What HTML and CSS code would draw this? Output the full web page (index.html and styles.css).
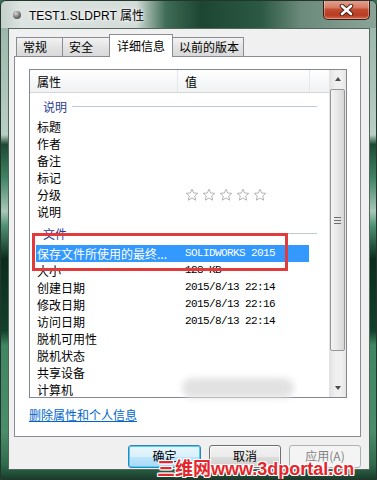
FILE: index.html
```html
<!DOCTYPE html>
<html lang="zh-CN">
<head>
  <meta charset="UTF-8" />
  <title>TEST1.SLDPRT 属性</title>
  <link rel="stylesheet" href="styles.css">
</head>
<body>

  <div class="window">
    <div class="titlebar">
      <span class="app-icon"></span>
      <span class="title">TEST1.SLDPRT 属性</span>
      <button class="close-btn" aria-label="关闭">
        <svg width="15" height="12" viewBox="0 0 15 12">
          <path d="M3 2 L12 10 M12 2 L3 10" stroke="#4a1a12" stroke-width="4.4" stroke-linecap="round"/>
          <path d="M3 2 L12 10 M12 2 L3 10" stroke="#ffffff" stroke-width="2.6" stroke-linecap="round"/>
        </svg>
      </button>
    </div>

    <div class="client">
      <div class="tabs">
        <div class="tab">常规</div>
        <div class="tab">安全</div>
        <div class="tab active">详细信息</div>
        <div class="tab">以前的版本</div>
      </div>

      <div class="panel">
        <div class="listview">
          <div class="list-body">
            <div class="list-header">
              <div class="hcell name">属性</div>
              <div class="hcell value">值</div>
              <div class="hcell filler"></div>
            </div>

            <div class="group"><span>说明</span><i></i></div>
            <div class="row"><span>标题</span><span></span></div>
            <div class="row"><span>作者</span><span></span></div>
            <div class="row"><span>备注</span><span></span></div>
            <div class="row"><span>标记</span><span></span></div>
            <div class="row">
              <span>分级</span>
              <span class="stars">
                <svg viewBox="0 0 14 14"><path d="M7 1.2 L8.7 5 L12.8 5.3 L9.7 8 L10.7 12.2 L7 10 L3.3 12.2 L4.3 8 L1.2 5.3 L5.3 5 Z"/></svg>
                <svg viewBox="0 0 14 14"><path d="M7 1.2 L8.7 5 L12.8 5.3 L9.7 8 L10.7 12.2 L7 10 L3.3 12.2 L4.3 8 L1.2 5.3 L5.3 5 Z"/></svg>
                <svg viewBox="0 0 14 14"><path d="M7 1.2 L8.7 5 L12.8 5.3 L9.7 8 L10.7 12.2 L7 10 L3.3 12.2 L4.3 8 L1.2 5.3 L5.3 5 Z"/></svg>
                <svg viewBox="0 0 14 14"><path d="M7 1.2 L8.7 5 L12.8 5.3 L9.7 8 L10.7 12.2 L7 10 L3.3 12.2 L4.3 8 L1.2 5.3 L5.3 5 Z"/></svg>
                <svg viewBox="0 0 14 14"><path d="M7 1.2 L8.7 5 L12.8 5.3 L9.7 8 L10.7 12.2 L7 10 L3.3 12.2 L4.3 8 L1.2 5.3 L5.3 5 Z"/></svg>
              </span>
            </div>
            <div class="row"><span>说明</span><span></span></div>

            <div class="group"><span>文件</span><i></i></div>
            <div class="row selected"><span>保存文件所使用的最终...</span><span class="val">SOLIDWORKS 2015</span></div>
            <div class="row"><span>大小</span><span class="val">128 KB</span></div>
            <div class="row"><span>创建日期</span><span class="val">2015/8/13 22:14</span></div>
            <div class="row"><span>修改日期</span><span class="val">2015/8/13 22:16</span></div>
            <div class="row"><span>访问日期</span><span class="val">2015/8/13 22:14</span></div>
            <div class="row"><span>脱机可用性</span><span></span></div>
            <div class="row"><span>脱机状态</span><span></span></div>
            <div class="row"><span>共享设备</span><span></span></div>
            <div class="row"><span>计算机</span><span></span></div>
          </div>

          <div class="scrollbar">
            <div class="sb-btn"><span class="arrow up"></span></div>
            <div class="sb-track">
              <div class="sb-thumb"><span class="grip"></span></div>
            </div>
            <div class="sb-btn"><span class="arrow down"></span></div>
          </div>
        </div>

        <a class="remove-link" href="#">删除属性和个人信息</a>
      </div>

      <div class="buttons">
        <button class="btn default">确定</button>
        <button class="btn">取消</button>
        <button class="btn disabled">应用(A)</button>
      </div>
    </div>

    <!-- things drawn over the screenshot -->
    <div class="highlight-box"></div>
    <div class="smudge"></div>
    <div class="watermark">三维网www.3dportal.cn</div>
  </div>

</body>
</html>
```

FILE: styles.css
```css
* {
  box-sizing: border-box;
}
body {
  margin: 0;
  background: #3b6e55;
  font-family: "Noto Sans CJK SC", "Liberation Sans", sans-serif;
  font-size: 12px;
  color: #000;
}
.window {
  position: relative;
  width: 377px;
  height: 480px;
  overflow: hidden;
  border: 1px solid #24352d;
  border-radius: 6px 6px 0 0;
  background: linear-gradient(to bottom,
    #6e8a7d 0%, #9db8ac 6%, #b8cfc5 28%, #1d4a34 30%, #3f8362 37%,
    #a9c7b9 44%, #4f9272 47%, #0c2c1d 54%, #12402b 69%, #3e8762 72%,
    #4a8d6a 90%, #2e6b4c 97%, #1a3d2c 100%);
}

/* title bar */
.titlebar {
  display: flex;
  align-items: center;
  height: 27px;
  padding-left: 12px;
  background: linear-gradient(to right,
    #c4d0ca 0, #dde4e1 20px, #d3dcd8 135px, #3e6c55 165px,
    #1d4632 200px, #2b5942 260px, #6b8a7b 300px, #8aa597 376px);
}
.app-icon {
  width: 8px;
  height: 8px;
  border-radius: 50%;
  background: radial-gradient(circle at 35% 30%, #d8d8d8, #6a6a6a 60%, #3a3a3a);
  margin-right: 8px;
}
.title {
  font-family: "Liberation Sans", "Noto Sans CJK SC", sans-serif;
  font-size: 12px;
  text-shadow: 0 0 6px #fff, 0 0 3px #fff;
}
.close-btn {
  align-self: flex-start;
  margin: -1px 6px 0 auto;
  width: 47px;
  height: 20px;
  padding: 0;
  border: 1px solid #3b1a14;
  border-top: none;
  border-radius: 0 0 5px 5px;
  background: linear-gradient(to bottom, #e6a493 0%, #d57a63 40%, #c24b31 50%, #b83c22 80%, #d0684c 100%);
  box-shadow: inset 0 0 0 1px rgba(255,255,255,.35);
  display: flex;
  align-items: center;
  justify-content: center;
}

/* client area */
.client {
  position: relative;
  margin: 0 6px 0 7px;
  height: 442px;
  padding: 6px 8px 0 5px;
  background: #f0f0f0;
  border: 1px solid #51665c;
}
.tabs {
  display: flex;
  align-items: flex-end;
  height: 21px;
  margin-left: 2px;
}
.tab {
  position: relative;
  height: 19px;
  min-width: 47px;
  padding: 0 4px 0 6px;
  line-height: 18px;
  border: 1px solid #898c95;
  border-bottom: none;
  border-left-width: 0;
  background: linear-gradient(to bottom, #f3f3f3, #e3e3e3 50%, #d9d9d9);
}
.tab:first-child {
  border-left-width: 1px;
}
.tab.active {
  height: 23px;
  margin-bottom: -1px;
  padding: 0 7px;
  line-height: 21px;
  background: #fff;
  border-left-width: 1px;
  border-right-width: 1px;
  margin-left: -1px;
  z-index: 1;
}
.tab.active + .tab {
  border-left-width: 0;
}
.panel {
  height: 381px;
  padding: 12px 13px 0 14px;
  background: #fff;
  border: 1px solid #898c95;
}

/* list view */
.listview {
  display: flex;
  height: 329px;
  border: 1px solid #828790;
}
.list-body {
  flex: 1;
  overflow: hidden;
}
.list-header {
  display: flex;
  height: 23px;
  background: linear-gradient(to bottom, #ffffff, #f7f8f9 50%, #f1f2f4);
  border-bottom: 1px solid #d5d5d5;
}
.hcell {
  padding: 3px 0 0 7px;
  border-right: 1px solid #e3e8ee;
}
.hcell.name {
  width: 148px;
}
.hcell.value {
  width: 132px;
}
.hcell.filler {
  flex: 1;
  border-right: none;
}
.group {
  display: flex;
  align-items: center;
  height: 25px;
  padding: 1px 12px 0 13px;
  color: #2a3d8f;
}
.group i {
  flex: 1;
  height: 1px;
  margin-left: 5px;
  background: #bccad8;
}
.row {
  display: grid;
  grid-template-columns: 142px 131px;
  height: 17px;
  line-height: 17px;
  margin-left: 6px;
  width: 273px;
  white-space: nowrap;
}
.row span:first-child {
  padding-left: 1px;
  overflow: hidden;
}
.row span + span {
  padding-left: 7px;
}
.row.selected {
  background: #3399ff;
  color: #fff;
}
.val {
  font-family: "Liberation Mono", monospace;
  font-size: 11px;
  letter-spacing: -0.6px;
}
.stars {
  display: flex;
  align-items: center;
  gap: 3px;
}
.stars svg {
  width: 14px;
  height: 14px;
  fill: #fff;
  stroke: #b4b4b4;
  stroke-width: 1;
}

/* scroll bar */
.scrollbar {
  display: flex;
  flex-direction: column;
  width: 17px;
  background: linear-gradient(to right, #e2e2e2, #f0f0f0 40%, #f0f0f0 70%, #e6e6e6);
}
.sb-btn {
  height: 18px;
  display: flex;
  align-items: center;
  justify-content: center;
}
.arrow {
  width: 0;
  height: 0;
  border-left: 3.5px solid transparent;
  border-right: 3.5px solid transparent;
}
.arrow.up {
  border-bottom: 4px solid #4d4d4d;
}
.arrow.down {
  border-top: 4px solid #4d4d4d;
}
.sb-track {
  flex: 1;
  padding: 1px 0 0;
}
.sb-thumb {
  height: 262px;
  margin: 0 1px;
  border: 1px solid #979797;
  border-radius: 2px;
  background: linear-gradient(to right, #f4f4f4, #e8e8e8 50%, #d6d6d6);
  display: flex;
  align-items: center;
  justify-content: center;
}
.grip {
  width: 7px;
  height: 7px;
  border-top: 1px solid #6e6e6e;
  border-bottom: 1px solid #6e6e6e;
  background: linear-gradient(to bottom, transparent 2px, #6e6e6e 2px, #6e6e6e 3px, transparent 3px);
}

.remove-link {
  display: inline-block;
  margin-top: 10px;
  color: #0066cc;
  line-height: 14px;
  text-decoration: underline;
}

/* dialog buttons */
.buttons {
  display: flex;
  justify-content: flex-end;
  gap: 8px;
  margin-top: 8px;
}
.btn {
  width: 72px;
  height: 23px;
  padding: 0 0 3px;
  font-family: "Noto Sans CJK SC", sans-serif;
  font-size: 12px;
  color: #000;
  border: 1px solid #707070;
  border-radius: 3px;
  background: linear-gradient(to bottom, #f2f2f2, #ebebeb 50%, #dddddd 51%, #cfcfcf);
  box-shadow: inset 0 0 0 1px rgba(255,255,255,.7);
}
.btn.default {
  width: 73px;
  border-color: #3c7fb1;
  background: linear-gradient(to bottom, #eaf6fd, #d9f0fc 50%, #bee6fd 51%, #a7d9f5);
  box-shadow: inset 0 0 0 1px #48d1ff;
}
.btn.disabled {
  color: #838383;
  border-color: #adb2b5;
  background: #f4f4f4;
  box-shadow: none;
}

/* overlays */
.highlight-box {
  position: absolute;
  left: 31px;
  top: 232px;
  width: 256px;
  height: 38px;
  border: 3px solid #e23b3b;
}
.smudge {
  position: absolute;
  left: 181px;
  top: 377px;
  width: 112px;
  height: 20px;
  border-radius: 10px;
  background: #e2e2e2;
  filter: blur(3px);
}
.watermark {
  position: absolute;
  left: 156px;
  top: 459px;
  font-family: "Liberation Sans", "Noto Sans CJK SC", sans-serif;
  font-size: 18px;
  font-weight: bold;
  line-height: 19px;
  color: #e4262c;
  text-shadow: 1px 0 #fff, -1px 0 #fff, 0 1px #fff, 0 -1px #fff,
    1px 1px #fff, -1px -1px #fff, 1px -1px #fff, -1px 1px #fff;
}
```
